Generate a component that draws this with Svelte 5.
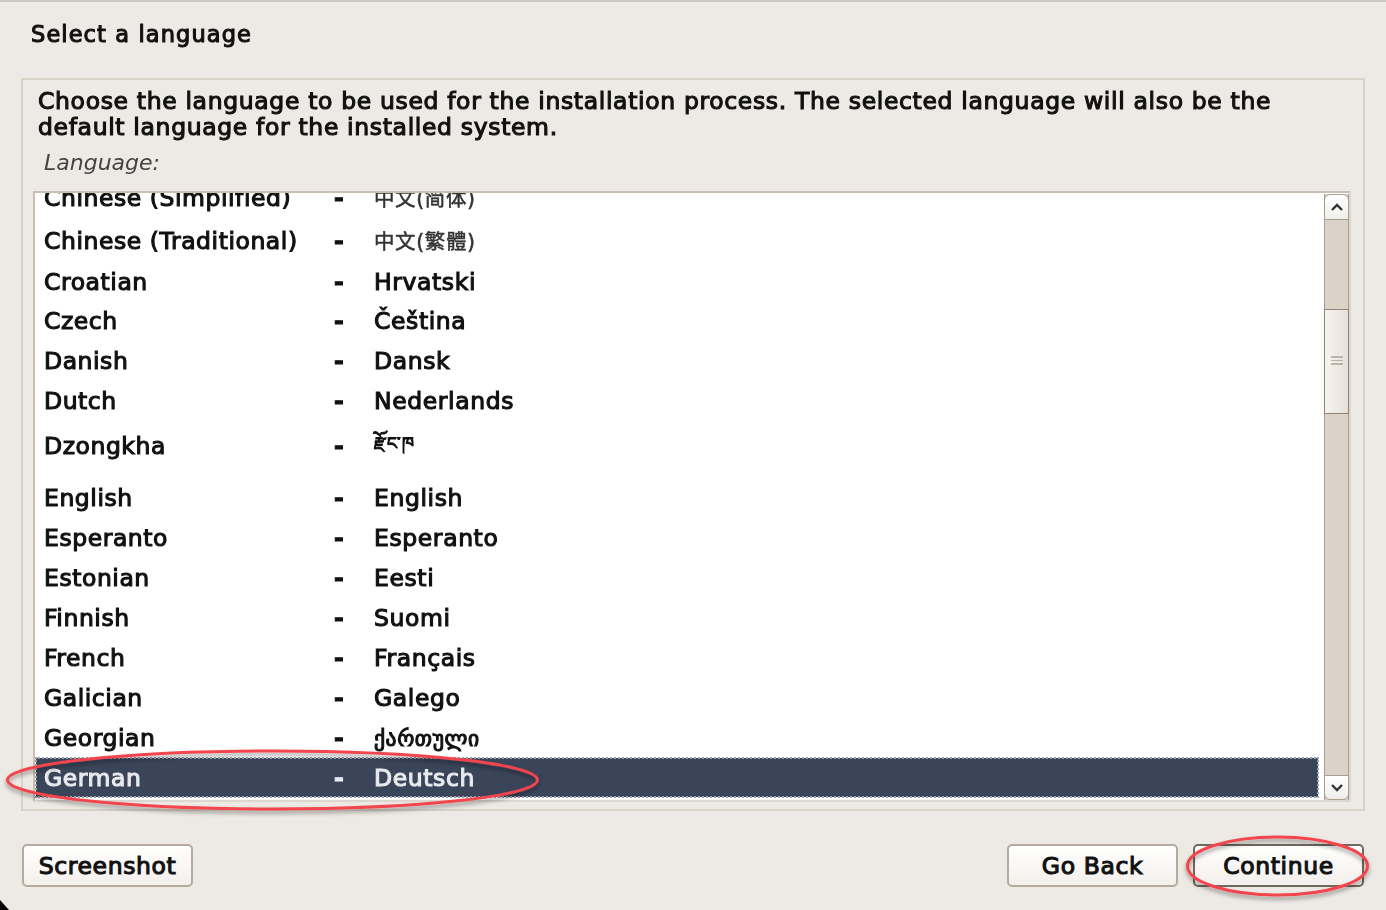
<script>
    let rows = [
        { name: "Chinese (Simplified)", native: "中文(简体)", h: 44, size: 20.5, cjk: true },
        { name: "Chinese (Traditional)", native: "中文(繁體)", h: 42, size: 20.5, cjk: true },
        { name: "Croatian", native: "Hrvatski", h: 39 },
        { name: "Czech", native: "Čeština", h: 40 },
        { name: "Danish", native: "Dansk", h: 40 },
        { name: "Dutch", native: "Nederlands", h: 40 },
        { name: "Dzongkha", native: "རྫོང་ཁ", h: 57, size: 17, tall: true },
        { name: "English", native: "English", h: 40 },
        { name: "Esperanto", native: "Esperanto", h: 40 },
        { name: "Estonian", native: "Eesti", h: 40 },
        { name: "Finnish", native: "Suomi", h: 40 },
        { name: "French", native: "Français", h: 40 },
        { name: "Galician", native: "Galego", h: 40 },
        { name: "Georgian", native: "ქართული", h: 40, size: 21.5 },
        { name: "German", native: "Deutsch", h: 39, selected: true },
    ];
</script>

<div class="page">
    <h1 class="title">Select a language</h1>

    <section class="frame">
        <p class="intro">
            Choose the language to be used for the installation process. The selected language will also be the<br />
            default language for the installed system.
        </p>
        <div class="label">Language:</div>

        <div class="listbox">
            <div class="list">
                <div class="rows">
                    {#each rows as row}
                        <div class="row" class:selected={row.selected} class:tall={row.tall} class:cjk={row.cjk} style="height: {row.h}px">
                            <span class="name">{row.name}</span>
                            <span class="dash">-</span>
                            <span class="native" style={row.size ? `font-size: ${row.size}px` : ""}>{row.native}</span>
                        </div>
                    {/each}
                </div>
            </div>

            <div class="scrollbar">
                <div class="step up">
                    <svg width="14" height="10" viewBox="0 0 14 10"><path d="M2 8l5-5 5 5" fill="none" stroke="#2e3436" stroke-width="2.4" /></svg>
                </div>
                <div class="trough">
                    <div class="thumb">
                        <i></i><i></i><i></i>
                    </div>
                </div>
                <div class="step down">
                    <svg width="14" height="10" viewBox="0 0 14 10"><path d="M2 2l5 5 5-5" fill="none" stroke="#2e3436" stroke-width="2.4" /></svg>
                </div>
            </div>
        </div>
    </section>

    <div class="actions">
        <button class="btn">Screenshot</button>
        <div class="right">
            <button class="btn">Go Back</button>
            <button class="btn default">Continue</button>
        </div>
    </div>

    <!-- hand drawn red marks on top of the screenshot -->
    <svg class="marks" width="1386" height="910" viewBox="0 0 1386 910">
        <defs>
            <filter id="shadow" x="-5%" y="-20%" width="110%" height="150%">
                <feDropShadow dx="0" dy="3" stdDeviation="2" flood-color="#000" flood-opacity="0.4" />
            </filter>
        </defs>
        <ellipse cx="272.5" cy="780" rx="265" ry="29" fill="none" stroke="#f2454d" stroke-width="3" filter="url(#shadow)" />
        <ellipse cx="1277.5" cy="866" rx="90" ry="29" fill="none" stroke="#f2454d" stroke-width="3" filter="url(#shadow)" />
        <path d="M0 900l9 10H0z" fill="#000" />
    </svg>
</div>

<style>
    :global(body) {
        margin: 0;
        background: #edeae5;
    }

    .page {
        position: relative;
        width: 1386px;
        height: 910px;
        box-sizing: border-box;
        padding: 0 21px;
        overflow: hidden;
        background: #edeae5;
        border-top: 2px solid #c9c9c7;
        font-family: "DejaVu Sans", "Noto Sans CJK SC", sans-serif;
        font-size: 23.5px;
        color: #111;
        -webkit-text-stroke: 1.1px currentColor;
    }

    .title {
        margin: 0;
        height: 76px;
        box-sizing: border-box;
        padding: 17px 0 0 10px;
        font-size: 22.5px;
        line-height: 30px;
        font-weight: 400;
        letter-spacing: 1.1px;
        -webkit-text-stroke: 1.1px currentColor;
        filter: blur(0.45px);
    }

    .frame {
        box-sizing: border-box;
        width: 1344px;
        height: 733px;
        padding: 8px 10px 0 10px;
        border: 2px solid #d8d2c7;
    }

    .intro {
        margin: 0 0 0 5px;
        width: 1290px;
        line-height: 26px;
        letter-spacing: 0.65px;
        filter: blur(0.45px);
    }

    .label {
        margin: 10px 0 0 11px;
        height: 41px;
        line-height: 26px;
        font-style: italic;
        font-size: 22px;
        color: #444;
        -webkit-text-stroke: 0;
        filter: blur(0.4px);
    }

    .listbox {
        display: flex;
        width: 1318px;
        height: 611px;
        box-sizing: border-box;
        border: 2px solid #c9c0b3;
        border-bottom-color: #ddd8cf;
        border-right-color: #ddd8cf;
        background: #fff;
    }

    .list {
        flex: 1;
        overflow: hidden;
    }

    .rows {
        margin-top: -17px;
        padding: 0 0 0 1px;
    }

    .row {
        display: flex;
        align-items: center;
        width: 1282px;
        box-sizing: border-box;
        padding-left: 8px;
    }

    .row.tall {
        padding-bottom: 7px;
    }

    .row.tall .native {
        padding-top: 3px;
    }

    .row.cjk .native {
        margin-bottom: 3px;
        -webkit-text-stroke: 0.5px currentColor;
        color: #333;
    }

    .row.selected {
        background: #3a4559;
        color: #e8eaee;
        outline: 2px dotted #9aa2ad;
        outline-offset: -1px;
    }

    .name,
    .dash,
    .native {
        filter: blur(0.45px);
    }

    .name {
        width: 290px;
        letter-spacing: 0.55px;
    }

    .dash {
        width: 40px;
        font-weight: 700;
    }

    .native {
        letter-spacing: 0.6px;
    }

    .scrollbar {
        display: flex;
        flex-direction: column;
        width: 25px;
        flex: none;
        margin-top: 1px;
        background: #dcd3c8;
        border-left: 1px solid #a89e90;
        border-right: 1px solid #a89e90;
        box-sizing: border-box;
    }

    .step {
        display: flex;
        align-items: center;
        justify-content: center;
        height: 25px;
        flex: none;
        background: linear-gradient(#fff, #f1eeea);
        border: 1px solid #a89e90;
        margin: 0 -1px;
        box-sizing: border-box;
    }

    .step.up {
        height: 26px;
        border-radius: 6px 6px 0 0;
    }

    .step.down {
        border-radius: 0 0 6px 6px;
    }

    .trough {
        flex: 1;
        padding-top: 89px;
    }

    .thumb {
        display: flex;
        flex-direction: column;
        align-items: center;
        justify-content: center;
        gap: 2px;
        height: 105px;
        padding-bottom: 2px;
        box-sizing: border-box;
        border: 1px solid #8d8577;
        margin: 0 -1px;
        background: linear-gradient(90deg, #f7f3f1, #e6e0d9);
    }

    .thumb i {
        display: block;
        width: 12px;
        height: 1.5px;
        background: #bdb3a6;
    }

    .actions {
        display: flex;
        justify-content: space-between;
        align-items: center;
        margin: 33px 1px 0 1px;
    }

    .right {
        display: flex;
        gap: 15px;
    }

    .btn {
        width: 171px;
        height: 43px;
        padding: 0;
        border: 2px solid #b5ab9c;
        border-radius: 5px;
        background: linear-gradient(#fff, #f3efeb);
        font: inherit;
        color: #111;
        letter-spacing: 0.6px;
        -webkit-text-stroke: 1.1px currentColor;
    }

    .btn.default {
        border-color: #6f6a60;
    }

    .marks {
        position: absolute;
        left: 0;
        top: -2px;
        pointer-events: none;
    }
</style>
